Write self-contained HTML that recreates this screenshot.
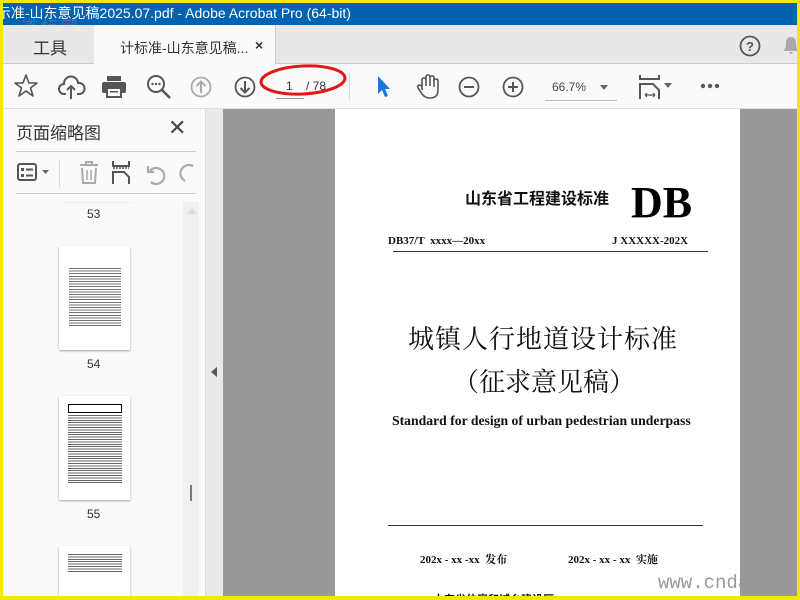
<!DOCTYPE html>
<html><head><meta charset="utf-8"><style>
*{margin:0;padding:0;box-sizing:border-box}
body{width:800px;height:600px;overflow:hidden;background:#f5e60a;position:relative;font-family:"Liberation Sans","Noto Sans CJK SC",sans-serif}
.a{position:absolute}
svg{position:absolute;overflow:visible}
.ser{font-family:"Liberation Serif","Noto Serif CJK SC",serif}
</style></head><body>
<div class="a" style="left:3px;top:3px;width:794px;height:593px;background:#fafafa;overflow:hidden">
 <div class="a" style="left:-10px;top:0;width:810px;height:22px;background:#0063b1;color:#fff;font-size:14px;line-height:20px;white-space:nowrap">&nbsp;示准-山东意见稿2025.07.pdf - Adobe Acrobat Pro (64-bit)</div>
 <div class="a" style="left:15px;top:10px;color:rgba(120,130,150,.6);font-size:17px;letter-spacing:3px;font-style:italic">道标网</div>
 <div class="a" style="left:0;top:22px;width:794px;height:39px;background:#e8e8e8;border-bottom:1px solid #ccc"></div>
 <div class="a" style="left:30px;top:31px;font-size:17px;color:#333">工具</div>
 <div class="a" style="left:91px;top:22px;width:182px;height:40px;background:#fafafa;border-right:1px solid #ccc"></div>
 <div class="a" style="left:117px;top:35px;font-size:14px;color:#333">计标准-山东意见稿...</div>
 <div class="a" style="left:252px;top:34px;font-size:14px;color:#333;font-weight:bold">×</div>
 <svg style="left:736px;top:32px" width="22" height="22"><circle cx="11" cy="11" r="9.5" fill="none" stroke="#555" stroke-width="1.8"/><text x="11" y="16" font-size="13" font-weight="bold" text-anchor="middle" fill="#555" font-family="Liberation Sans">?</text></svg>
 <svg style="left:778px;top:30px" width="20" height="24"><path d="M3 18 L3 17 Q5 15 5 10 Q5 4 10 4 Q15 4 15 10 Q15 15 17 17 L17 18Z M8 19 Q10 23 12 19Z" fill="#aaa"/></svg>
 <div class="a" style="left:0;top:105px;width:794px;height:1px;background:#ddd"></div>
 <svg style="left:10px;top:70px" width="26" height="26"><path d="M13 2 L16 10 L24 10 L17.5 15 L20 23 L13 18 L6 23 L8.5 15 L2 10 L10 10Z" fill="none" stroke="#555" stroke-width="1.6" stroke-linejoin="round"/></svg>
 <svg style="left:55px;top:72px" width="28" height="26"><path d="M8 19 H6 A5 5 0 0 1 6 9 A7 7 0 0 1 20 8 A5 5 0 0 1 22 19 H19" fill="none" stroke="#555" stroke-width="2"/><path d="M13 24 V11 M9 15 L13 11 L17 15" fill="none" stroke="#555" stroke-width="2"/></svg>
 <svg style="left:98px;top:72px" width="26" height="24"><rect x="6" y="1" width="14" height="5" fill="#555"/><rect x="1" y="7" width="24" height="11" rx="2" fill="#555"/><rect x="6" y="13" width="14" height="9" fill="#fff" stroke="#555" stroke-width="2"/><rect x="9" y="16" width="8" height="1.5" fill="#555"/></svg>
 <svg style="left:143px;top:71px" width="26" height="26"><circle cx="10" cy="10" r="8" fill="none" stroke="#555" stroke-width="2"/><path d="M16 16 L24 24" stroke="#555" stroke-width="2.5"/><circle cx="6.5" cy="10" r="1.2" fill="#555"/><circle cx="10" cy="10" r="1.2" fill="#555"/><circle cx="13.5" cy="10" r="1.2" fill="#555"/></svg>
 <svg style="left:187px;top:73px" width="22" height="22"><circle cx="11" cy="11" r="9.5" fill="none" stroke="#aaa" stroke-width="1.8"/><path d="M11 17 V6 M6.5 10 L11 5.5 L15.5 10" fill="none" stroke="#aaa" stroke-width="2"/></svg>
 <svg style="left:231px;top:73px" width="22" height="22"><circle cx="11" cy="11" r="9.5" fill="none" stroke="#555" stroke-width="1.8"/><path d="M11 5 V16 M6.5 12 L11 16.5 L15.5 12" fill="none" stroke="#555" stroke-width="2"/></svg>
 <div class="a" style="left:283px;top:76px;font-size:12px;color:#333">1&nbsp;&nbsp;&nbsp;&nbsp;/ 78</div>
 <div class="a" style="left:273px;top:95px;width:28px;height:1px;background:#999"></div>
 <svg style="left:255px;top:60px" width="92" height="36"><ellipse cx="45" cy="17" rx="42" ry="14" fill="none" stroke="#e01818" stroke-width="3" transform="rotate(-3 45 17)"/></svg>
 <div class="a" style="left:346px;top:70px;width:1px;height:28px;background:#ddd"></div>
 <svg style="left:373px;top:72px" width="16" height="24"><path d="M2 1 L2 19 L6 15 L9 22 L12 21 L9 14 L14 14Z" fill="#1a73e8"/></svg>
 <svg style="left:413px;top:71px" width="24" height="26"><path d="M6 16 V6 Q6 4 8 4 Q10 4 10 6 V12 V3 Q10 1 12 1 Q14 1 14 3 V12 V4 Q14 2 16 2 Q18 2 18 4 V13 V7 Q18 5 20 5 Q22 5 22 7 V16 Q22 24 14 24 Q9 24 6 20 L2 14 Q1 12 3 11 Q5 11 6 13" fill="none" stroke="#555" stroke-width="1.6"/></svg>
 <svg style="left:455px;top:73px" width="22" height="22"><circle cx="11" cy="11" r="9.5" fill="none" stroke="#555" stroke-width="1.8"/><path d="M6 11 H16" stroke="#555" stroke-width="2"/></svg>
 <svg style="left:499px;top:73px" width="22" height="22"><circle cx="11" cy="11" r="9.5" fill="none" stroke="#555" stroke-width="1.8"/><path d="M6 11 H16 M11 6 V16" stroke="#555" stroke-width="2"/></svg>
 <div class="a" style="left:549px;top:77px;font-size:12px;color:#444">66.7%</div>
 <div class="a" style="left:542px;top:97px;width:72px;height:1px;background:#bbb"></div>
 <svg style="left:597px;top:82px" width="10" height="6"><path d="M0 0 H8 L4 5Z" fill="#666"/></svg>
 <svg style="left:636px;top:72px" width="40" height="26"><path d="M1 0 V4 H20 V0" fill="none" stroke="#555" stroke-width="2"/><path d="M1 24 V9 H14 L20 15 V24" fill="none" stroke="#555" stroke-width="2"/><path d="M6 20 H16 M6 20 L8 18 M6 20 L8 22 M16 20 L14 18 M16 20 L14 22" stroke="#555" stroke-width="1.2" fill="none"/><path d="M25 8 H33 L29 13Z" fill="#666"/></svg>
 <svg style="left:697px;top:80px" width="22" height="6"><circle cx="3" cy="3" r="2.2" fill="#555"/><circle cx="10" cy="3" r="2.2" fill="#555"/><circle cx="17" cy="3" r="2.2" fill="#555"/></svg>
 <div class="a" style="left:0;top:106px;width:202px;height:490px;background:#fafafa"></div>
 <div class="a" style="left:13px;top:116px;font-size:17px;color:#333">页面缩略图</div>
 <div class="a" style="left:165px;top:112px;font-size:22px;color:#444">✕</div>
 <div class="a" style="left:13px;top:148px;width:180px;height:1px;background:#ccc"></div>
 <svg style="left:14px;top:160px" width="40" height="20"><rect x="1" y="1" width="18" height="16" rx="2" fill="none" stroke="#555" stroke-width="2"/><rect x="4" y="5" width="3" height="3" fill="#555"/><rect x="4" y="11" width="3" height="3" fill="#555"/><path d="M9 6.5 H16 M9 12.5 H16" stroke="#555" stroke-width="2"/><path d="M25 7 H32 L28.5 11Z" fill="#666"/></svg>
 <div class="a" style="left:56px;top:157px;width:1px;height:28px;background:#ddd"></div>
 <svg style="left:75px;top:158px" width="22" height="24"><path d="M2 4 H20 M8 4 V1 H14 V4 M4 7 L5 22 H17 L18 7" fill="none" stroke="#aaa" stroke-width="2"/><path d="M9 9 V19 M13 9 V19" stroke="#aaa" stroke-width="1.5"/></svg>
 <svg style="left:109px;top:158px" width="20" height="24"><path d="M1 0 V5 H17 V0" fill="none" stroke="#555" stroke-width="2"/><path d="M1 7 H17" stroke="#555" stroke-width="1.5" stroke-dasharray="2 1"/><path d="M1 23 V11 H12 L17 16 V23" fill="none" stroke="#555" stroke-width="2"/></svg>
 <svg style="left:143px;top:160px" width="22" height="22"><path d="M5 19 A8 8 0 1 0 4 8 M2 3 V9 H8" fill="none" stroke="#aaa" stroke-width="2.2"/></svg>
 <svg style="left:176px;top:160px" width="16" height="22"><path d="M14 3 A8 8 0 0 0 6 18" fill="none" stroke="#aaa" stroke-width="2.2"/></svg>
 <div class="a" style="left:13px;top:190px;width:180px;height:1px;background:#ccc"></div>
 <div class="a" style="left:60px;top:199px;width:70px;height:1px;background:#eee"></div>
 <div class="a" style="left:84px;top:204px;font-size:12px;color:#333">53</div>
 <div class="a" style="left:56px;top:243px;width:71px;height:104px;background:#fff;box-shadow:0 1px 2px rgba(0,0,0,.35)">
  <div class="a" style="left:10px;top:22px;width:52px;height:60px;background:repeating-linear-gradient(#000 0 1px,#fff 1px 2.6px);opacity:.55"></div>
 </div>
 <div class="a" style="left:84px;top:354px;font-size:12px;color:#333">54</div>
 <div class="a" style="left:56px;top:393px;width:71px;height:104px;background:#fff;box-shadow:0 1px 2px rgba(0,0,0,.35)">
  <div class="a" style="left:9px;top:8px;width:54px;height:9px;border:1px solid #000"></div>
  <div class="a" style="left:9px;top:19px;width:54px;height:68px;background:repeating-linear-gradient(#000 0 1px,#fff 1px 2.4px);opacity:.6"></div>
 </div>
 <div class="a" style="left:84px;top:504px;font-size:12px;color:#333">55</div>
 <div class="a" style="left:56px;top:543px;width:71px;height:60px;background:#fff;box-shadow:0 1px 2px rgba(0,0,0,.35)">
  <div class="a" style="left:9px;top:8px;width:54px;height:18px;background:repeating-linear-gradient(#000 0 1px,#fff 1px 2.4px);opacity:.6"></div>
 </div>
 <div class="a" style="left:180px;top:199px;width:16px;height:397px;background:#f0f0f0"></div>
 <svg style="left:184px;top:205px" width="10" height="6"><path d="M0 6 L5 0 L10 6Z" fill="#ddd"/></svg>
 <div class="a" style="left:187px;top:482px;width:2px;height:16px;background:#777"></div>
 <div class="a" style="left:202px;top:106px;width:18px;height:490px;background:#e9e9e9;border-left:1px solid #ddd"></div>
 <svg style="left:208px;top:364px" width="6" height="10"><path d="M6 0 V10 L0 5Z" fill="#555"/></svg>
 <div class="a" style="left:220px;top:106px;width:574px;height:490px;background:#999"></div>
 <div class="a" style="left:332px;top:106px;width:405px;height:490px;background:#fff;overflow:hidden">
  <div class="a" style="left:130px;top:76px;font-size:16px;font-weight:bold;color:#111;font-family:'Noto Sans CJK SC',sans-serif">山东省工程建设标准</div>
  <div class="a ser" style="left:296px;top:70px;font-size:44px;font-weight:bold;color:#000;line-height:48px">DB</div>
  <div class="a ser" style="left:53px;top:126px;font-size:11px;font-weight:bold;color:#111">DB37/T&nbsp; xxxx—20xx</div>
  <div class="a ser" style="left:277px;top:126px;font-size:11px;font-weight:bold;color:#111">J XXXXX-202X</div>
  <div class="a" style="left:58px;top:142px;width:315px;height:1px;background:#333"></div>
  <div class="a" style="left:73px;top:210px;font-size:26px;color:#111;letter-spacing:1px;font-family:'Noto Serif CJK SC',serif">城镇人行地道设计标准</div>
  <div class="a" style="left:118px;top:253px;font-size:26px;color:#111;font-family:'Noto Serif CJK SC',serif">（征求意见稿）</div>
  <div class="a ser" style="left:57px;top:304px;font-size:13.7px;font-weight:bold;color:#111">Standard for design of urban pedestrian underpass</div>
  <div class="a" style="left:53px;top:416px;width:315px;height:1px;background:#333"></div>
  <div class="a ser" style="left:85px;top:442px;font-size:11px;font-weight:bold;color:#111">202x - xx -xx&nbsp; 发布</div>
  <div class="a ser" style="left:233px;top:442px;font-size:11px;font-weight:bold;color:#111">202x - xx - xx&nbsp; 实施</div>
  <div class="a" style="left:98px;top:482px;font-size:11px;font-weight:bold;color:#111">山东省住房和城乡建设厅</div>
  <div class="a" style="left:323px;top:463px;font-size:19px;color:#999;font-family:'Liberation Mono',monospace;white-space:nowrap">www.cndac</div>
 </div>
</div>
</body></html>
